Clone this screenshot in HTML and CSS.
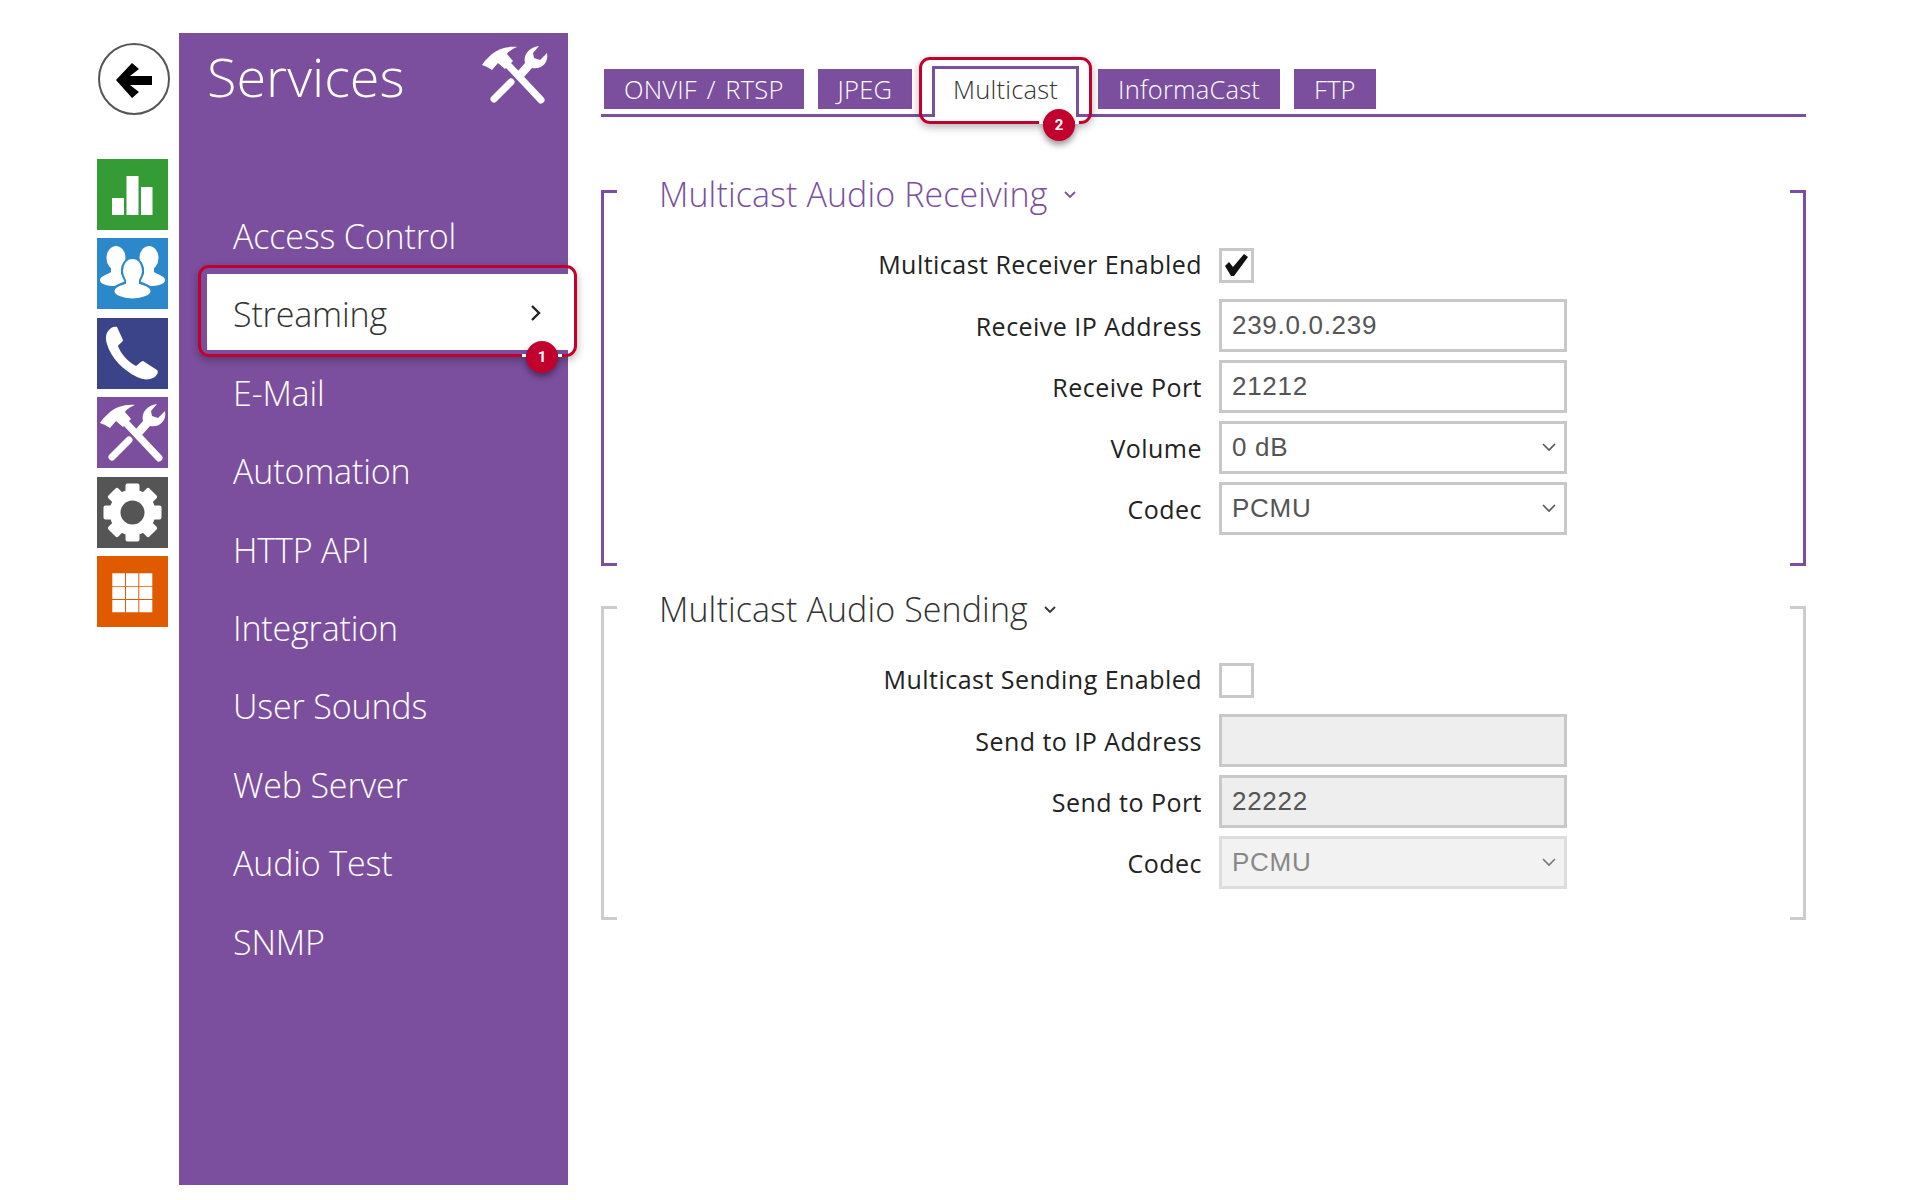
FILE: index.html
```html
<!DOCTYPE html>
<html lang="en">
<head>
    <meta charset="UTF-8">
    <title>Services - Streaming - Multicast</title>
    <link rel="stylesheet" href="styles.css">
</head>
<body>
    <svg class="icon-defs" width="0" height="0">
        <symbol id="icon-tools" viewBox="0 0 71 71">
            <path fill="#fff" d="M3 26 C6 21 10 18 13 15 C19 10 28 7 38 8 C33 10 29 13 28 15 L34 22 L26 30 L19 24 L13 31 L8 28 Z"/>
            <path stroke="#fff" stroke-width="7" stroke-linecap="round" d="M30 27 L62 61"/>
            <path fill="#fff" d="M39 32 L46 24 C44 16 50 8 60 7 L54 14 L55 19 L61 21 L68 14 C70 24 62 31 53 29 L45 38 Z"/>
            <path stroke="#fff" stroke-width="7" stroke-linecap="round" d="M15 60 L32 43"/>
        </symbol>
    </svg>

    <div class="page">
        <nav class="rail">
            <a class="back-btn" href="#">
                <svg width="68" height="68" viewBox="0 0 68 68"><path d="M16 35 L32 18 L39 24 L30 31 L52 31 L52 40 L30 40 L39 47 L32 53 Z"/></svg>
            </a>
            <div class="tiles">
                <a class="tile tile-green" href="#">
                    <svg viewBox="0 0 71 71"><path fill="#fff" d="M15 39 H27 V56 H15 Z M29.5 17 H41.5 V56 H29.5 Z M44 28 H55.5 V56 H44 Z"/></svg>
                </a>
                <a class="tile tile-blue" href="#">
                    <svg viewBox="0 0 71 71">
                        <g fill="#fff">
                            <ellipse cx="19" cy="20" rx="9.5" ry="12"/>
                            <ellipse cx="52" cy="20" rx="9.5" ry="12"/>
                            <path d="M14 28 H24 V36 L30 42 L18 48 C10 48 3 46 3 42 C3 38 12 36 14 34 Z"/>
                            <path d="M57 28 H47 V36 L41 42 L53 48 C61 48 68 46 68 42 C68 38 59 36 57 34 Z"/>
                        </g>
                        <g fill="#fff" stroke="#2b88cb" stroke-width="2">
                            <ellipse cx="35.5" cy="53" rx="19" ry="8.5"/>
                            <path d="M35.5 20 C42 20 46 26 46 33 C46 39 43 42 42 44 L29 44 C28 42 25 39 25 33 C25 26 29 20 35.5 20 Z"/>
                        </g>
                        <path fill="#fff" d="M29 42 H42 V48 H29 Z"/>
                    </svg>
                </a>
                <a class="tile tile-navy" href="#">
                    <svg viewBox="0 0 71 71"><path fill="#fff" d="M12 12 C14 9 18 8 20 9 L26 22 C26 24 22 26 21 28 C24 36 31 44 39 48 C41 47 44 43 46 43 L60 52 C62 54 60 58 56 60 C52 62 46 62 40 59 C26 52 14 40 10 26 C8 20 9 15 12 12 Z"/></svg>
                </a>
                <a class="tile tile-purple" href="#">
                    <svg viewBox="0 0 71 71"><use href="#icon-tools"/></svg>
                </a>
                <a class="tile tile-grey" href="#">
                    <svg viewBox="-35.5 -35.5 71 71">
                        <g fill="#fff">
                            <circle r="23"/>
                            <rect x="-7" y="-29" width="14" height="10" rx="2"/>
                            <rect x="-7" y="-29" width="14" height="10" rx="2" transform="rotate(45)"/>
                            <rect x="-7" y="-29" width="14" height="10" rx="2" transform="rotate(90)"/>
                            <rect x="-7" y="-29" width="14" height="10" rx="2" transform="rotate(135)"/>
                            <rect x="-7" y="-29" width="14" height="10" rx="2" transform="rotate(180)"/>
                            <rect x="-7" y="-29" width="14" height="10" rx="2" transform="rotate(225)"/>
                            <rect x="-7" y="-29" width="14" height="10" rx="2" transform="rotate(270)"/>
                            <rect x="-7" y="-29" width="14" height="10" rx="2" transform="rotate(315)"/>
                        </g>
                        <circle r="12" fill="#555"/>
                    </svg>
                </a>
                <a class="tile tile-orange" href="#">
                    <svg viewBox="0 0 71 71"><path fill="#fff" d="M15.3 17.3 H28 V30 H15.3 Z M29 17.3 H41.3 V30 H29 Z M42.3 17.3 H55.3 V30 H42.3 Z M15.3 30.8 H28 V43 H15.3 Z M29 30.8 H41.3 V43 H29 Z M42.3 30.8 H55.3 V43 H42.3 Z M15.3 44 H28 V56.3 H15.3 Z M29 44 H41.3 V56.3 H29 Z M42.3 44 H55.3 V56.3 H42.3 Z"/></svg>
                </a>
            </div>
        </nav>

        <aside class="sidebar">
            <div class="sidebar-header">
                <h1 class="sidebar-title">Services</h1>
                <svg class="sidebar-icon" viewBox="0 0 71 71"><use href="#icon-tools"/></svg>
            </div>
            <ul class="menu">
                <li class="menu-item">Access Control</li>
                <li class="menu-item menu-active">
                    Streaming
                    <svg class="menu-arrow" width="12" height="18" viewBox="0 0 12 18"><path d="M2 2 L9 9 L2 16" fill="none" stroke="#222" stroke-width="2.4"/></svg>
                    <span class="callout"></span>
                    <span class="badge badge-menu">1</span>
                </li>
                <li class="menu-item">E-Mail</li>
                <li class="menu-item">Automation</li>
                <li class="menu-item">HTTP API</li>
                <li class="menu-item">Integration</li>
                <li class="menu-item">User Sounds</li>
                <li class="menu-item">Web Server</li>
                <li class="menu-item">Audio Test</li>
                <li class="menu-item">SNMP</li>
            </ul>
        </aside>

        <main class="content">
            <div class="tabs">
                <a class="tab" href="#">ONVIF / RTSP</a>
                <a class="tab" href="#">JPEG</a>
                <a class="tab tab-active" href="#">
                    Multicast
                    <span class="callout"></span>
                    <span class="badge badge-tab">2</span>
                </a>
                <a class="tab" href="#">InformaCast</a>
                <a class="tab" href="#">FTP</a>
            </div>

            <section class="section section-on">
                <h2 class="section-title">Multicast Audio Receiving
                    <svg class="title-arrow" width="12" height="8" viewBox="0 0 12 8"><path d="M1 1 L6 6 L11 1" fill="none" stroke="currentColor" stroke-width="1.8"/></svg>
                </h2>
                <div class="form">
                    <label class="field-label label-check">Multicast Receiver Enabled</label>
                    <div class="check-cell">
                        <span class="checkbox">
                            <svg width="29" height="29" viewBox="0 0 29 29"><path d="M3 15 L7 11 L11 16 L22 3 L26 6 L12 25 L9 25 Z"/></svg>
                        </span>
                    </div>
                    <label class="field-label">Receive IP Address</label>
                    <input class="field-input" type="text" value="239.0.0.239">
                    <label class="field-label">Receive Port</label>
                    <input class="field-input" type="text" value="21212">
                    <label class="field-label">Volume</label>
                    <div class="select-wrap">
                        <select class="field-input"><option>0 dB</option></select>
                        <svg class="select-arrow" width="14" height="9" viewBox="0 0 14 9"><path d="M1 1 L7 7 L13 1" fill="none" stroke="#555" stroke-width="1.6"/></svg>
                    </div>
                    <label class="field-label">Codec</label>
                    <div class="select-wrap">
                        <select class="field-input"><option>PCMU</option></select>
                        <svg class="select-arrow" width="14" height="9" viewBox="0 0 14 9"><path d="M1 1 L7 7 L13 1" fill="none" stroke="#555" stroke-width="1.6"/></svg>
                    </div>
                </div>
            </section>

            <section class="section section-off">
                <h2 class="section-title">Multicast Audio Sending
                    <svg class="title-arrow" width="12" height="8" viewBox="0 0 12 8"><path d="M1 1 L6 6 L11 1" fill="none" stroke="currentColor" stroke-width="1.8"/></svg>
                </h2>
                <div class="form">
                    <label class="field-label label-check">Multicast Sending Enabled</label>
                    <div class="check-cell"><span class="checkbox"></span></div>
                    <label class="field-label">Send to IP Address</label>
                    <input class="field-input" type="text" value="" disabled>
                    <label class="field-label">Send to Port</label>
                    <input class="field-input" type="text" value="22222" disabled>
                    <label class="field-label">Codec</label>
                    <div class="select-wrap">
                        <select class="field-input field-faded" disabled><option>PCMU</option></select>
                        <svg class="select-arrow" width="14" height="9" viewBox="0 0 14 9"><path d="M1 1 L7 7 L13 1" fill="none" stroke="#777" stroke-width="1.6"/></svg>
                    </div>
                </div>
            </section>
        </main>
    </div>
</body>
</html>
```

FILE: styles.css
```css
* {
    box-sizing: border-box;
}
html, body {
    margin: 0;
    padding: 0;
    background: #fff;
}
body {
    font-family: "Open Sans", "Liberation Sans", sans-serif;
    color: #222;
}
a {
    text-decoration: none;
    color: inherit;
}
.icon-defs {
    position: absolute;
}
.page {
    display: flex;
    height: 1200px;
    padding: 33px 0 0 97px;
}

/* left rail */
.rail {
    width: 82px;
    flex: none;
}
.back-btn {
    display: block;
    width: 72px;
    height: 72px;
    margin: 10px 0 0 1px;
    border: 2px solid #555;
    border-radius: 50%;
}
.back-btn svg {
    display: block;
}
.tiles {
    display: flex;
    flex-direction: column;
    gap: 8.4px;
    margin-top: 44px;
}
.tile {
    display: block;
    width: 71px;
    height: 71px;
}
.tile svg {
    display: block;
    width: 71px;
    height: 71px;
}
.tile-green { background: #359b35; }
.tile-blue { background: #2b88cb; }
.tile-navy { background: #3c4489; }
.tile-purple { background: #7b4f9e; }
.tile-grey { background: #555; }
.tile-orange { background: #e05a00; }

/* purple sidebar */
.sidebar {
    width: 389px;
    height: 1152px;
    flex: none;
    background: #7b4f9e;
    color: #fff;
}
.sidebar-header {
    display: flex;
    justify-content: space-between;
    height: 163px;
    padding: 6px 18px 0 28px;
}
.sidebar-title {
    margin: 0;
    font-size: 54px;
    font-weight: 300;
    line-height: 74px;
}
.sidebar-icon {
    width: 71px;
    height: 71px;
}
.menu {
    list-style: none;
    margin: 0;
    padding: 0;
}
.menu-item {
    position: relative;
    display: flex;
    align-items: center;
    height: 76px;
    margin: 0 0 2.4px 28px;
    padding: 4px 0 0 26px;
    font-size: 34px;
    font-weight: 300;
    letter-spacing: -0.15px;
}
.menu-active {
    background: #fff;
    color: #333;
}
.menu-arrow {
    position: absolute;
    right: 26px;
    top: 30px;
}

/* red annotation frames */
.callout {
    position: absolute;
    border: 3px solid #c1002d;
    border-radius: 11px;
    box-shadow: 0 3px 8px rgba(0, 0, 0, 0.3);
}
.menu-active .callout {
    left: -9px;
    right: -9px;
    top: -9px;
    bottom: -7px;
}
.tab-active .callout {
    left: -16px;
    right: -16px;
    top: -12px;
    bottom: -7px;
}
.badge {
    position: absolute;
    width: 32px;
    height: 32px;
    border-radius: 50%;
    background: #c1002d;
    color: #fff;
    font-family: "Roboto", sans-serif;
    font-size: 15px;
    font-weight: 700;
    line-height: 32px;
    letter-spacing: 0;
    text-align: center;
    box-shadow: 0 4px 6px rgba(0, 0, 0, 0.4);
}
/* small break in the frame either side of the badge */
.badge::before {
    content: "";
    position: absolute;
    left: -4px;
    right: -4px;
    height: 3px;
    background: linear-gradient(90deg, #fff 4px, transparent 4px, transparent calc(100% - 4px), #fff calc(100% - 4px));
}
.badge-menu {
    right: 10px;
    bottom: -23px;
}
.badge-menu::before {
    top: 13px;
}
.badge-tab {
    right: 1px;
    bottom: -24px;
}
.badge-tab::before {
    top: 12px;
}

/* main column */
.content {
    width: 1205px;
    margin-left: 33px;
    padding-top: 33px;
}
.tabs {
    display: flex;
    align-items: flex-end;
    padding-left: 3px;
    border-bottom: 3px solid #7b4f9e;
}
.tab {
    position: relative;
    height: 40px;
    margin: 0 14px 5px 0;
    padding: 0 20px;
    background: #7b4f9e;
    color: #fff;
    font-size: 25.5px;
    font-weight: 300;
    letter-spacing: 0.2px;
    word-spacing: 3px;
    line-height: 40px;
}
.tab-active {
    height: 51px;
    margin: 0 19px -3px 6px;
    padding: 0 18px;
    border: 3px solid #7b4f9e;
    border-bottom: none;
    background: #fff;
    color: #333;
}
.section {
    display: flow-root;
    position: relative;
    padding: 0 0 31px 58px;
}
.section::before,
.section::after {
    content: "";
    position: absolute;
    top: 0;
    bottom: 0;
    width: 13px;
    border: 3px solid;
}
.section::before {
    left: 0;
    border-right: none;
}
.section::after {
    right: 0;
    border-left: none;
}
.section-on {
    margin-top: 73px;
    color: #7b4f9e;
}
.section-off {
    margin-top: 40px;
    color: #333;
}
.section-on::before,
.section-on::after {
    border-color: #7b4f9e;
}
.section-off::before,
.section-off::after {
    border-color: #ccc;
}
.section-title {
    display: flex;
    align-items: center;
    gap: 16px;
    height: 44px;
    margin: -18px 0 32px;
    font-size: 34px;
    font-weight: 300;
    letter-spacing: 0.1px;
    line-height: 44px;
}
.section-off .section-title {
    margin-top: -19px;
}
.title-arrow {
    margin-top: 2px;
}
.form {
    display: grid;
    grid-template-columns: 543px 348px;
    column-gap: 17px;
    row-gap: 8px;
    align-items: center;
}
.field-label {
    color: #222;
    font-size: 25px;
    letter-spacing: 0.47px;
    text-align: right;
}
.label-check {
    align-self: start;
    margin-top: -1px;
}
.check-cell {
    height: 43px;
}
.checkbox {
    display: block;
    width: 35px;
    height: 35px;
    border: 3px solid #c8c8c8;
    background: #fff;
}
.checkbox svg {
    display: block;
    fill: #111;
}
.field-input {
    display: block;
    width: 348px;
    height: 53px;
    margin: 0;
    padding: 0 10px;
    border: 3px solid #c8c8c8;
    border-radius: 0;
    outline: none;
    background: #fff;
    color: #555;
    font-family: "Liberation Sans", sans-serif;
    font-size: 26px;
    letter-spacing: 0.7px;
    appearance: none;
}
select.field-input {
    padding-bottom: 2px;
}
.field-input:disabled {
    background: #eee;
    color: #555;
    opacity: 1;
}
.field-input.field-faded:disabled {
    border-color: #ddd;
    background: #f2f2f2;
    color: #888;
}
.select-wrap {
    position: relative;
}
.select-arrow {
    position: absolute;
    right: 11px;
    top: 22px;
}
```
